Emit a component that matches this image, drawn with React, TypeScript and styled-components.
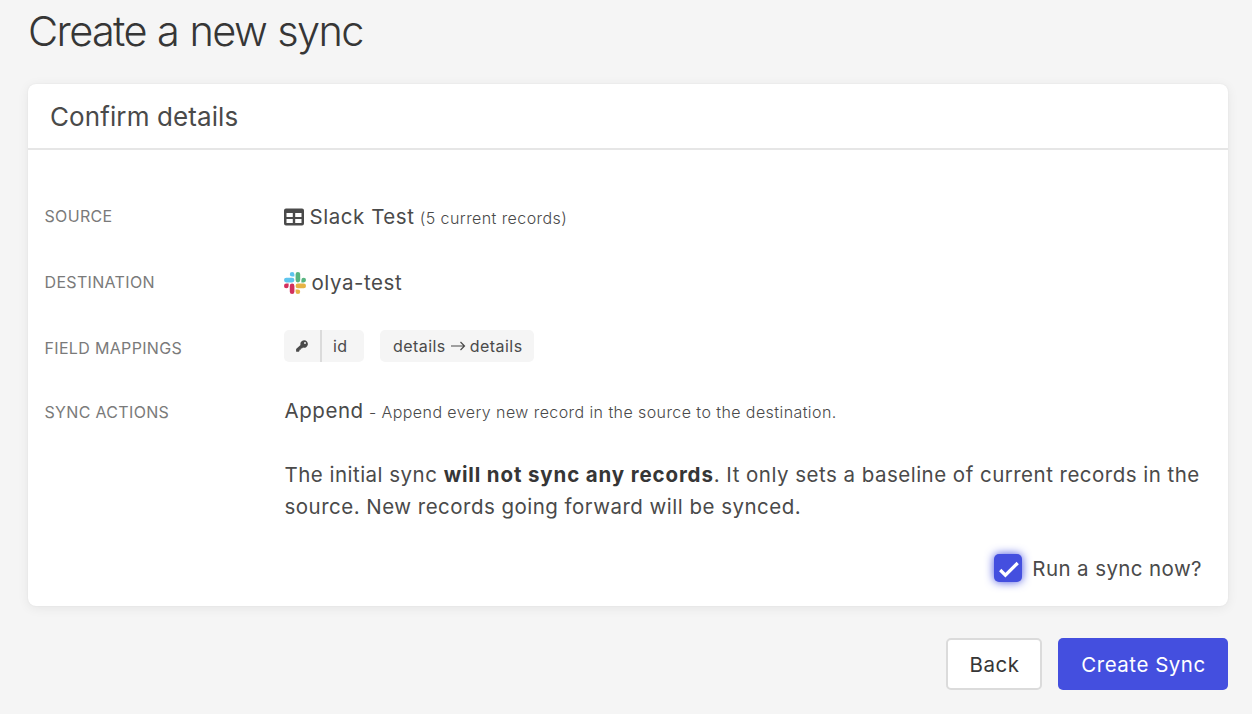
import React from 'react';
import styled, { createGlobalStyle } from 'styled-components';

const Global = createGlobalStyle`
  * { box-sizing: border-box; }
  body { margin: 0; background: #f5f5f5; color: #4a4a4a; font-family: Inter, sans-serif; overflow: hidden; }
`;
const Page = styled.main`
  width: 1252px;
  height: 714px;
  padding: 0 24px 0 28px;
`;
const Title = styled.h1`
  margin: 0;
  height: 84px;
  padding-top: 6px;
  font-size: 41.5px;
  line-height: 50px;
  font-weight: 300;
  letter-spacing: -1.65px;
  word-spacing: 1.2px;
  color: #363636;
`;
const Card = styled.section`
  height: 522px;
  background: #fff;
  border-radius: 8px;
  box-shadow: 0 0 2px rgba(0, 0, 0, 0.06), 0 2px 12px rgba(0, 0, 0, 0.07);
`;
const CardHeader = styled.header`
  height: 66px;
  border-bottom: 2px solid #e6e6e6;
  padding: 0 22px;
  font-size: 26px;
  line-height: 66px;
  letter-spacing: 0.1px;
`;
const Body = styled.div`
  padding: 34px 17px 0 16.5px;
`;
const Row = styled.div<{ $h: number }>`
  display: grid;
  grid-template-columns: 240px 1fr;
  height: ${p => p.$h}px;
`;
const Label = styled.div`
  font-size: 16px;
  line-height: 64px;
  letter-spacing: 0.33px;
  color: #7a7a7a;
`;
const Value = styled.div<{ $line: number }>`
  font-size: 20.5px;
  line-height: ${p => p.$line}px;
  letter-spacing: 0.55px;
  white-space: pre;
`;
const Small = styled.small`
  font-size: 16px;
  font-weight: 300;
  letter-spacing: 0.42px;
  margin-left: -1px;
`;
const Tags = styled.div`
  display: flex;
  gap: 16px;
  padding-top: 14px;
  margin-left: -0.5px;
`;
const Tag = styled.span`
  display: flex;
  height: 32px;
  background: #f5f5f5;
  border-radius: 5px;
  font-size: 16px;
  line-height: 32px;
  letter-spacing: 0.45px;
`;
const TagKey = styled.span`
  display: grid;
  place-items: center;
  width: 38px;
  border-right: 2px solid #dbdbdb;
`;
const TagText = styled.span<{ $w: number }>`
  width: ${p => p.$w}px;
  padding-left: ${p => (p.$w > 100 ? 13 : 11)}px;
  display: flex;
  align-items: center;
`;
const Arrow = styled.svg`
  margin: 0 4px;
`;
const TableIcon = styled.svg`
  vertical-align: -2px;
  margin: 0 5.5px 0 -0.5px;
`;
const SlackIcon = styled.svg`
  vertical-align: -4px;
  margin: 0 5.5px 0 -0.5px;
`;
const Note = styled.p`
  margin: 0;
  font-size: 20.5px;
  line-height: 32px;
  letter-spacing: 0.48px;
  white-space: nowrap;
  b { font-weight: 700; letter-spacing: 0.86px; color: #363636; }
`;
const Check = styled.label`
  display: flex;
  justify-content: flex-end;
  align-items: center;
  gap: 10px;
  font-size: 20.5px;
  letter-spacing: 0.4px;
  padding: 15px 9px 0 0;
`;
const Box = styled.span`
  display: grid;
  place-items: center;
  width: 28px;
  height: 28px;
  border-radius: 5px;
  background: #444fdf;
  box-shadow: 0 0 10px #444fdf;
`;
const Actions = styled.footer`
  display: flex;
  justify-content: flex-end;
  gap: 16px;
  margin-top: 32px;
`;
const Button = styled.button<{ $primary?: boolean }>`
  width: ${p => (p.$primary ? 170 : 96)}px;
  height: 52px;
  border-radius: 5px;
  border: ${p => (p.$primary ? '0' : '2px solid #dbdbdb')};
  background: ${p => (p.$primary ? '#444fdf' : '#fff')};
  color: ${p => (p.$primary ? '#fff' : '#363636')};
  font: 400 20.5px Inter, sans-serif;
  letter-spacing: 0.52px;
  padding: 0 0 0 1px;
`;

export default function App() {
  return (
    <>
      <Global />
      <Page>
        <Title>Create a new sync</Title>
        <Card>
          <CardHeader>Confirm details</CardHeader>
          <Body>
            <Row $h={66}>
              <Label>SOURCE</Label>
              <Value $line={66}>
                <TableIcon width="20" height="18" viewBox="0 0 20 18">
                  <path fill="#4a4a4a" fillRule="evenodd" d="M2 .5h16a2 2 0 0 1 2 2v13a2 2 0 0 1-2 2H2a2 2 0 0 1-2-2v-13a2 2 0 0 1 2-2ZM2.5 5v4h6.3V5Zm8.7 0v4h6.3V5ZM2.5 11v4h6.3v-4Zm8.7 0v4h6.3v-4Z" />
                </TableIcon>
                Slack Test <Small>(5 current records)</Small>
              </Value>
            </Row>
            <Row $h={66}>
              <Label>DESTINATION</Label>
              <Value $line={66}>
                <SlackIcon width="22" height="22" viewBox="0 0 122.8 122.8">
                  <path fill="#d2305e" d="M25.8 77.6a12.9 12.9 0 1 1-12.9-12.9h12.9zM32.3 77.6a12.9 12.9 0 0 1 25.8 0v32.3a12.9 12.9 0 0 1-25.8 0z" />
                  <path fill="#5ec5ee" d="M45.2 25.8a12.9 12.9 0 1 1 12.9-12.9v12.9zM45.2 32.3a12.9 12.9 0 0 1 0 25.8H12.9a12.9 12.9 0 0 1 0-25.8z" />
                  <path fill="#57b580" d="M97 45.2a12.9 12.9 0 1 1 12.9 12.9H97zM90.5 45.2a12.9 12.9 0 0 1-25.8 0V12.9a12.9 12.9 0 0 1 25.8 0z" />
                  <path fill="#e6b345" d="M77.6 97a12.9 12.9 0 1 1-12.9 12.9V97zM77.6 90.5a12.9 12.9 0 0 1 0-25.8h32.3a12.9 12.9 0 0 1 0 25.8z" />
                </SlackIcon>
                olya-test
              </Value>
            </Row>
            <Row $h={64}>
              <Label>FIELD MAPPINGS</Label>
              <Tags>
                <Tag>
                  <TagKey>
                    <svg width="12" height="12" viewBox="0 0 12 12">
                      <path fill="#4a4a4a" fillRule="evenodd" d="M8 .3a3.7 3.7 0 1 1-1 7.2L6 8.5H4.8v1.3H3.5v1.1l-.8.8H.6a.5.5 0 0 1-.5-.5V9l4.4-4A3.7 3.7 0 0 1 8 .3Zm1 1.8a.95.95 0 1 0 0 1.9.95.95 0 0 0 0-1.9Z" />
                    </svg>
                  </TagKey>
                  <TagText $w={42}>id</TagText>
                </Tag>
                <Tag>
                  <TagText $w={154}>
                    details
                    <Arrow width="16" height="12" viewBox="0 0 16 12" fill="none" stroke="#4a4a4a" strokeWidth="1.2">
                      <path d="M1 6h13.5M10.5 2l4 4-4 4" />
                    </Arrow>
                    details
                  </TagText>
                </Tag>
              </Tags>
            </Row>
            <Row $h={79}>
              <Label>SYNC ACTIONS</Label>
              <Value $line={62}>Append <Small>- Append every new record in the source to the destination.</Small></Value>
            </Row>
            <Row $h={80}>
              <span />
              <Note>
                The initial sync <b>will not sync any records</b>. It only sets a baseline of current records in the<br />
                source. New records going forward will be synced.
              </Note>
            </Row>
            <Check>
              <Box>
                <svg width="22" height="20" viewBox="0 0 22 20" fill="none" stroke="#fff" strokeWidth="3.2">
                  <path d="m3.2 12 5.2 5.2L20.7 5" />
                </svg>
              </Box>
              Run a sync now?
            </Check>
          </Body>
        </Card>
        <Actions>
          <Button>Back</Button>
          <Button $primary>Create Sync</Button>
        </Actions>
      </Page>
    </>
  );
}
